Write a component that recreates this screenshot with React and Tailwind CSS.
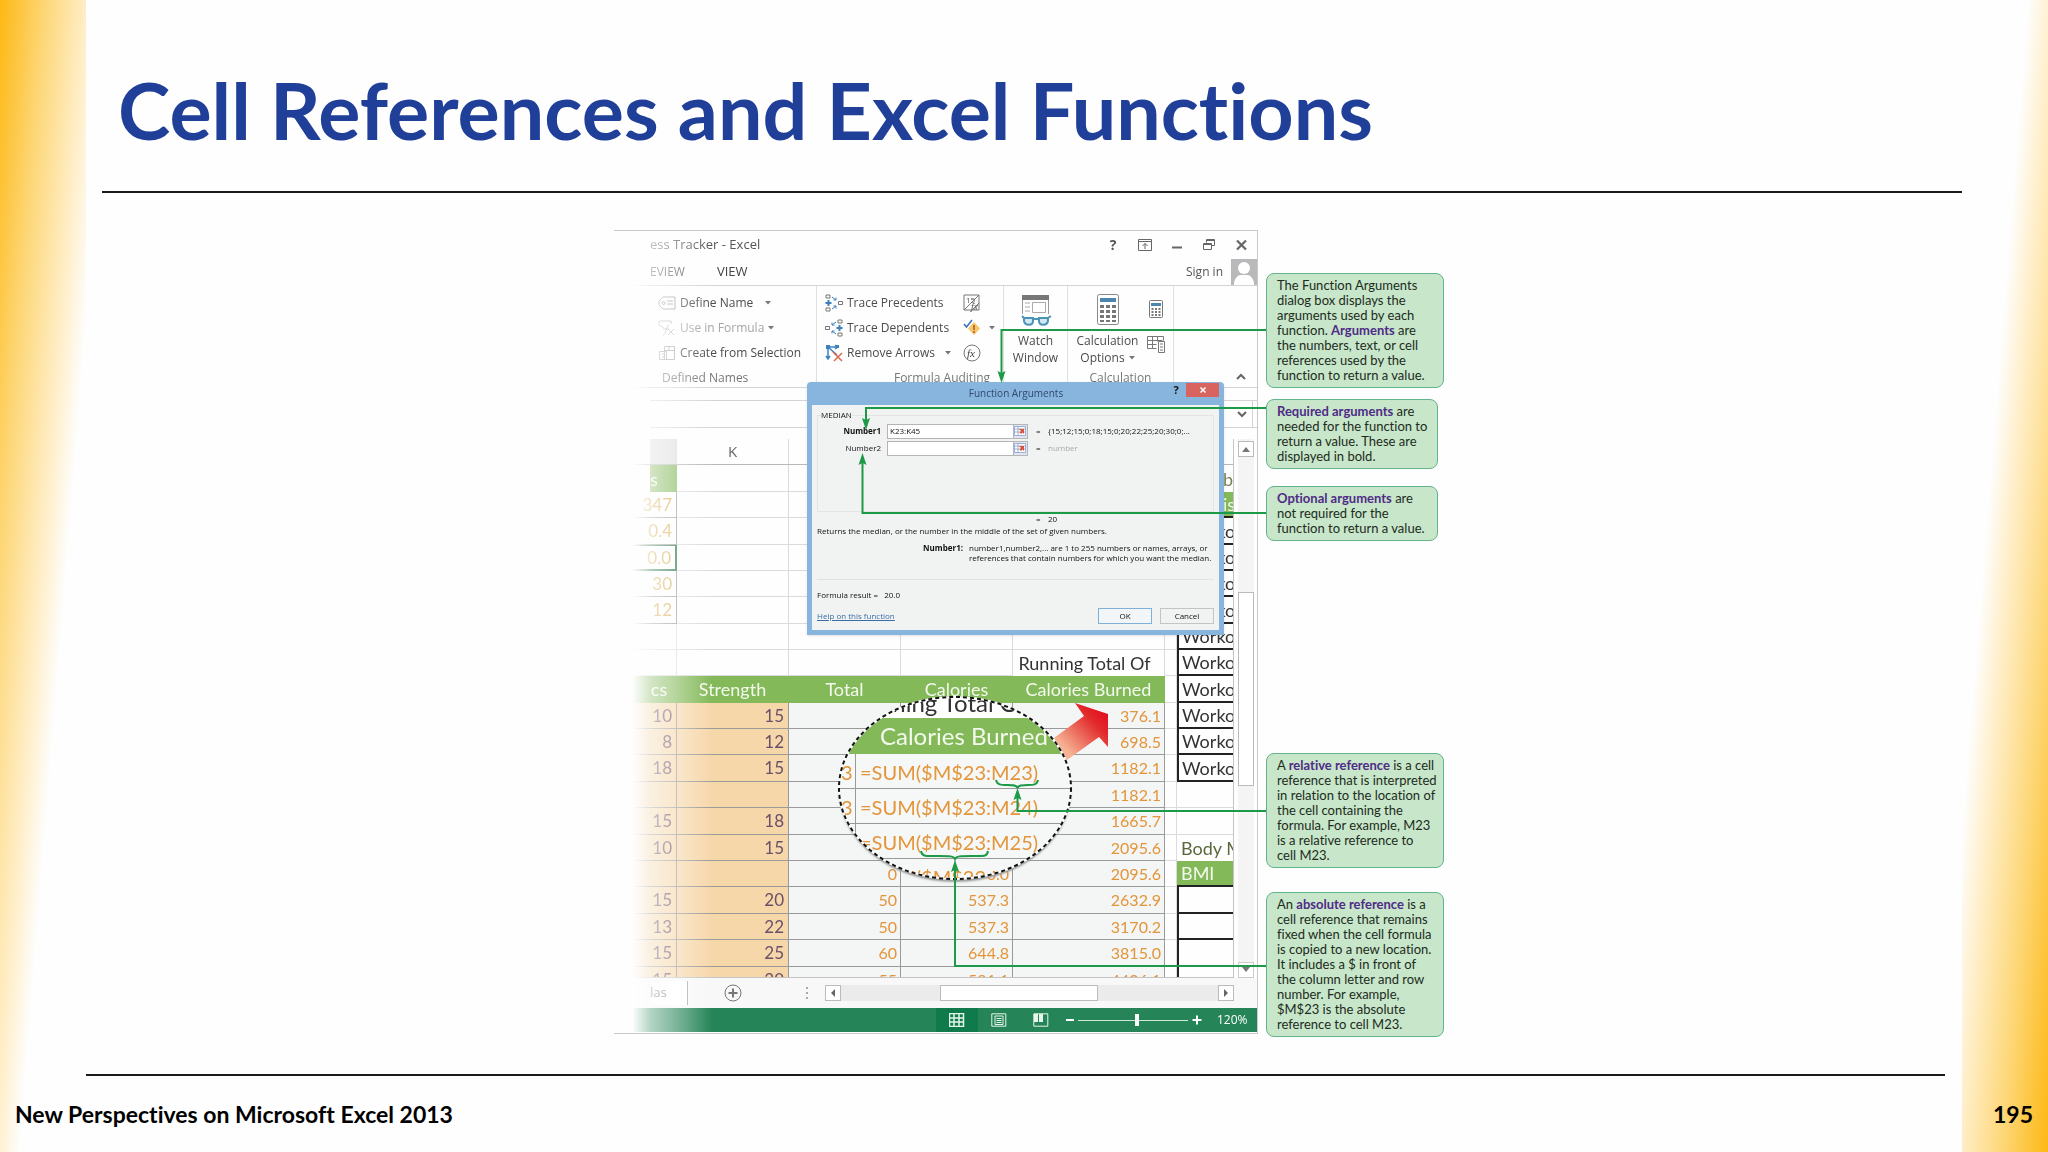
import React from "react";

const headCell = "border-b border-r border-[#84b95a] bg-[#84b95a] p-0 text-center font-normal text-[#f3f9ec]";
const plainCell = "border-b border-r border-[#dcdadf] p-0";
const peachCell = "border-b border-r border-[#9c9a98] bg-[#f6d7aa] p-0 pr-1 text-right text-[17px] text-[#6a5068]";
const valueCell = "border-b border-r border-[#9a9a9a] bg-[#f4f5f5] p-0 pr-[3px] text-right text-[16px] text-[#e3953a]";

const dataRows = [
  ["10", "15", "", "", "376.1", "Workout"],
  ["8", "12", "", "", "698.5", "Workout"],
  ["18", "15", "", "", "1182.1", "Workout"],
  ["", "", "", "", "1182.1", ""],
  ["15", "18", "", "", "1665.7", ""],
  ["10", "15", "", "", "2095.6", "Body Mass"],
  ["", "", "0", "0.0", "2095.6", "BMI"],
  ["15", "20", "50", "537.3", "2632.9", "box"],
  ["13", "22", "50", "537.3", "3170.2", "box"],
  ["15", "25", "60", "644.8", "3815.0", "box"],
  ["15", "30", "55", "591.1", "4406.1", "box"],
];

const topRows = ["s", "347", "0.4", "0.0", "30", "12", ""];

const rowHeight = (i) => (i % 5 === 0 || i % 5 === 2 ? "h-[27px]" : "h-[26px]");

const Caret = () => (
  <svg className="h-1 w-1.5 shrink-0" viewBox="0 0 6 4">
    <path d="M0 0h6L3 3.6z" fill="#777" />
  </svg>
);

// right hand column of the sheet, cut off by the scroll bar
const SideCell = ({ value }) => {
  if (value === "Workout") {
    return (
      <td className="overflow-hidden border-b-2 border-l-2 border-[#222] p-0 pl-[3px] text-left text-[#333]">
        Workout
      </td>
    );
  }
  if (value === "Body Mass") {
    return <td className="overflow-hidden p-0 pl-1 text-left text-[#58683c]">Body Mass</td>;
  }
  if (value === "BMI") {
    return <td className="border-b-2 border-[#222] bg-[#84b95a] p-0 pl-1 text-left text-[#f3f9ec]">BMI</td>;
  }
  if (value === "box") {
    return <td className="border-b-2 border-l-2 border-[#222] p-0"></td>;
  }
  return <td className="border-b border-[#dcdadf] p-0"></td>;
};

const TitleBar = () => (
  <div className="flex h-[27px] items-center justify-between pl-9 pr-[9px] text-[#555]">
    <span className="text-[13px]">ess Tracker - Excel</span>
    <div className="flex items-center gap-[18px]">
      <button aria-label="Help" className="w-3.5 text-[14px] font-bold leading-4">?</button>
      <button aria-label="Ribbon display options">
        <svg className="h-3 w-3.5" viewBox="0 0 14 12" fill="none" stroke="#666">
          <path d="M.5.5h13v11H.5zM.5 2.5h13M7 10V4.5M4.5 7 7 4.5 9.500 7" />
        </svg>
      </button>
      <button aria-label="Minimize">
        <svg className="h-3 w-3.5" viewBox="0 0 14 12">
          <path d="M2 8.500h10" stroke="#666" strokeWidth="2" />
        </svg>
      </button>
      <button aria-label="Restore">
        <svg className="h-3 w-3.5" viewBox="0 0 14 12" fill="none" stroke="#666">
          <path d="M4.500 3.500v-3h8v6h-3M1.500 4.500h8v6h-8zM1.500 5.500h8M4.500 1.500h8" />
        </svg>
      </button>
      <button aria-label="Close">
        <svg className="h-3 w-3.5" viewBox="0 0 14 12">
          <path d="m3 1.500 9 9m0-9-9 9" stroke="#666" strokeWidth="2.200" />
        </svg>
      </button>
    </div>
  </div>
);

const TabRow = () => (
  <div className="flex h-7 items-center border-b border-[#d4d4d4] pl-9 text-[12px] text-[#555]">
    <button>EVIEW</button>
    <button className="ml-8 text-[13px] text-[#444]">VIEW</button>
    <button className="ml-auto mr-2">Sign in</button>
    <svg className="size-[26px]" viewBox="0 0 26 26">
      <path d="M0 0h26v26H0z" fill="#b9b9bb" />
      <circle cx="13" cy="9" r="6" fill="#fff" />
      <path d="M3 26c0-7 4-10 7-10h6c3 0 7 3 7 10z" fill="#fff" />
    </svg>
  </div>
);

const TraceIcon = ({ flip }) => (
  <svg className="h-[18px] w-[18px] shrink-0" viewBox="0 0 18 18" fill="none" stroke="#777">
    <g transform={flip ? "rotate(180 9 9)" : undefined}>
      <path d="M1 1h4v3H1zM1 14h4v3H1zM13.500 7.500h4v3h-4z" />
      <path d="M3.500 6v6M.5 9h6" stroke="#3b80bd" strokeWidth="2" />
      <path d="m7 3 4 3m0-2.500V6H8.500M7 15l4-3m0 2.500V12H8.500" stroke="#3b80bd" />
    </g>
  </svg>
);

const Ribbon = () => (
  <div className="flex h-[102px] border-b border-[#d4d4d4] pl-9 text-[12px] text-[#4c4c4c]">
    <div className="w-[167px] border-r border-[#e0e0e0] pl-2 pt-1">
      <button className="flex h-[25px] items-center gap-1">
        <svg className="h-3.5 w-[18px]" viewBox="0 0 18 14" fill="none" stroke="#999">
          <path d="M5 1h12v12H5L1 9V5zM9 5h6M9 8h6" />
          <circle cx="5.500" cy="7" r="1.500" />
        </svg>
        Define Name
        <span className="ml-2"><Caret /></span>
      </button>
      <button className="flex h-[25px] items-center gap-1 text-[#a5a5a5]">
        <svg className="h-4 w-[18px]" viewBox="0 0 18 16" fill="none" stroke="#bbb">
          <path d="M6 8 1 5V1h12v3M5 15c3 0 3-9 6-10M5 9h6M10 9l6 6m0-6-6 6" />
        </svg>
        Use in Formula
        <Caret />
      </button>
      <button className="flex h-[25px] items-center gap-1">
        <svg className="h-4 w-[18px]" viewBox="0 0 18 16" fill="none" stroke="#aaa">
          <path d="M6.500 1.500h10v13h-10zM6.500 5.500h10M11 1v4M1.500 6.500h7v8h-7zM4 9h3M4 12h3" />
        </svg>
        Create from Selection
      </button>
      <p className="pl-1 leading-[26px] text-[#777]">Defined Names</p>
    </div>
    <div className="w-[187px] border-r border-[#e0e0e0] pl-2 pt-1">
      <div className="flex">
        <div className="flex w-[138px] flex-col">
          <button className="flex h-[25px] items-center gap-1"><TraceIcon />Trace Precedents</button>
          <button className="flex h-[25px] items-center gap-1"><TraceIcon flip />Trace Dependents</button>
          <button className="flex h-[25px] items-center gap-1">
            <svg className="size-[18px] shrink-0" viewBox="0 0 18 18" fill="none">
              <path d="M3 3h10M3 3v12m-2-3 2 3 2-3M3 3l9 8M10 1l3 2-3 2" stroke="#3b80bd" strokeWidth="1.500" />
              <path d="M1 1h4v4H1zM11 1h3v3h-3z" fill="#3b80bd" />
              <path d="m8 8 9 9m0-8-8 8" stroke="#d8694c" strokeWidth="1.500" />
            </svg>
            <span className="mr-1.5">Remove Arrows</span>
            <Caret />
          </button>
        </div>
        <div className="flex flex-col">
          <button aria-label="Show formulas" className="flex h-[25px] items-center">
            <svg className="size-[18px]" viewBox="0 0 18 18">
              <path d="M1 1h15v15H1zM1 16 16 1M9 16l7-7" fill="none" stroke="#777" />
              <text x="3" y="9" fontSize="8" fill="#555">15</text>
              <text x="8" y="16" fontSize="9" fontStyle="italic" fill="#555">fx</text>
            </svg>
          </button>
          <button aria-label="Error checking" className="flex h-[25px] items-center gap-2">
            <svg className="size-[18px]" viewBox="0 0 18 18">
              <path d="m11 3 6 6.500-6 6.500-6-6.500z" fill="#f6c667" />
              <path d="M11 6v5m0 1v2" stroke="#b0562c" strokeWidth="1.500" />
              <path d="m1 5 2.500 3L9 1" fill="none" stroke="#3b70bd" strokeWidth="1.500" />
            </svg>
            <Caret />
          </button>
          <button aria-label="Evaluate formula" className="flex h-[25px] items-center">
            <svg className="size-[18px]" viewBox="0 0 18 18">
              <circle cx="9" cy="9" r="8" fill="none" stroke="#777" />
              <text x="4" y="13" fontSize="11" fontStyle="italic" fontFamily="Liberation Serif, serif" fill="#444">fx</text>
            </svg>
          </button>
        </div>
      </div>
      <p className="pl-14 text-center leading-[26px] text-[#777]">Formula Auditing</p>
    </div>
    <button className="flex w-16 flex-col items-center border-r border-[#e0e0e0] pt-2 leading-[17px]">
      <svg className="mb-1.5 h-8 w-8" viewBox="0 0 32 32" fill="none">
        <path d="M2.500 1v19M28.500 1v19" stroke="#999" />
        <path d="M2 1h27v5H2z" fill="#777" />
        <path d="M5 9h5M5 13h5M5 17h5" stroke="#aaa" />
        <path d="M12.500 8.500h13v10h-13z" stroke="#aaa" />
        <path d="M4 24h9v3c0 5-8 5-9 0zM19 24h9v3c-1 5-9 5-9 0zM13 25h6M4 24l-2-2m26 2 3-2" fill="#d3e8f2" stroke="#4c93b5" strokeWidth="2" />
      </svg>
      Watch
      <br />
      Window
    </button>
    <div className="flex w-[106px] flex-col border-r border-[#e0e0e0] pt-2">
      <div className="flex h-[71px]">
        <button className="flex w-[79px] flex-col items-center leading-[17px]">
          <svg className="mb-1.5 h-8 w-6 shrink-0" viewBox="0 0 24 32">
            <rect x="1.500" y=".5" width="21" height="30" rx="2" fill="#fff" stroke="#888" />
            <path d="M4 4h16v4H4z" fill="#4c86ae" />
            <path d="M6 11v17M12 11v17M18 11v17" stroke="#777" strokeWidth="4" strokeDasharray="3 2" />
          </svg>
          <span>Calculation</span>
          <span className="flex items-center gap-1">Options <Caret /></span>
        </button>
        <div className="flex flex-col items-center gap-[17px] pt-1.5">
          <button aria-label="Calculate now">
            <svg className="h-[18px] w-[18px]" viewBox="0 0 18 18">
              <rect x="2.500" y=".5" width="13" height="17" rx="1" fill="#fff" stroke="#777" />
              <path d="M4 3h10v3H4z" fill="#4c86ae" />
              <path d="M5.500 8v8M9 8v8M12.500 8v8" stroke="#777" strokeWidth="2" strokeDasharray="2 1" />
            </svg>
          </button>
          <button aria-label="Calculate sheet">
            <svg className="h-[18px] w-[18px]" viewBox="0 0 18 18" fill="none" stroke="#777">
              <path d="M.5 1.500h16v4M.5 1.500v12h9M.5 5.500h15M.5 9.500h9M5.500 1.500v12M10.500 1.500v5M11.500 6.500h6v11h-6zM13 9h3M13 12h3M13 15h3" />
            </svg>
          </button>
        </div>
      </div>
      <span className="text-center leading-[26px] text-[#777]">Calculation</span>
    </div>
    <button aria-label="Collapse ribbon" className="ml-auto mr-2.5 self-end pb-1.5">
      <svg className="h-2 w-3" viewBox="0 0 12 8">
        <path d="m2 6 4-4 4 4" fill="none" stroke="#666" strokeWidth="2" />
      </svg>
    </button>
  </div>
);

const Sheet = () => (
  <div className="flex h-[539px]">
    <div className="w-[620px] shrink-0 overflow-hidden border-b border-r border-[#c4c4c4]">
      <div className="flex h-[26px] border-b border-[#b8b8b8] pl-9 text-[15px] leading-[25px] text-[#666]">
        <div className="w-[27px] border-r border-[#ddd] bg-[#dedede]"></div>
        <div className="w-28 border-r border-[#ddd] text-center">K</div>
      </div>
      <table className="w-full table-fixed border-separate border-spacing-0 whitespace-nowrap font-[Lato,sans-serif] text-[18px] leading-5">
        <colgroup>
          <col className="w-[63px]" />
          <col className="w-28" />
          <col className="w-28" />
          <col className="w-28" />
          <col className="w-[152px]" />
          <col className="w-3" />
          <col className="w-14" />
        </colgroup>
        <tbody>
          {topRows.map((value, i) => (
            <tr key={i} className={rowHeight(i)}>
              {i === 0 && (
                <td className="bg-[linear-gradient(to_right,transparent_36px,#84b95a_36px)] p-0 pl-9 text-left text-[#f3f9ec]">s</td>
              )}
              {i > 0 && i < 6 && (
                <td
                  className={`border-b border-r p-0 pr-1 text-right text-[17px] text-[#d9ac4f] ${
                    i === 3 ? "border-b-2 border-r-2 border-t border-[#217346]" : "border-[#999]"
                  }`}
                >
                  {value}
                </td>
              )}
              {i === 6 && <td className={plainCell}></td>}
              <td className={plainCell}></td>
              <td className={plainCell}></td>
              <td className={plainCell}></td>
              <td className={plainCell}></td>
              <td className={plainCell}></td>
              {i === 0 && <td className="p-0 pl-[46px] text-left text-[#7c8358]">b</td>}
              {i === 1 && (
                <td className="overflow-hidden border-b-2 border-[#222] bg-[#84b95a] p-0 pl-[46px] text-left text-[#f3f9ec]">is</td>
              )}
              {i > 1 && <SideCell value="Workout" />}
            </tr>
          ))}
          <tr className="h-[26px]">
            <td className={plainCell}></td>
            <td className={plainCell}></td>
            <td className={plainCell}></td>
            <td className={plainCell}></td>
            <td className="border-r border-[#dcdadf] p-0 pr-2 text-center text-[#333]">Running Total Of</td>
            <td className={plainCell}></td>
            <SideCell value="Workout" />
          </tr>
          <tr className="h-[27px]">
            <th className={`${headCell} pl-7`}>cs</th>
            <th className={headCell}>Strength</th>
            <th className={headCell}>Total</th>
            <th className={headCell}>Calories</th>
            <th className={headCell}>Calories Burned</th>
            <td className={plainCell}></td>
            <SideCell value="Workout" />
          </tr>
          {dataRows.map((row, i) => (
            <tr key={i} className={rowHeight(i + 3)}>
              <td className={peachCell}>{row[0]}</td>
              <td className={peachCell}>{row[1]}</td>
              <td className={valueCell}>{row[2]}</td>
              <td className={valueCell}>{row[3]}</td>
              <td className={valueCell}>{row[4]}</td>
              <td className={plainCell}></td>
              <SideCell value={row[5]} />
            </tr>
          ))}
        </tbody>
      </table>
    </div>
    <div className="ml-1 flex w-4 flex-col bg-[#f4f4f4]">
      <button aria-label="Scroll up" className="mt-0.5 flex h-4 items-center justify-center border border-[#bbb] bg-white">
        <svg className="h-1.5 w-2" viewBox="0 0 8 6"><path d="M0 6h8L4 1z" fill="#777" /></svg>
      </button>
      <div className="mt-[135px] h-[194px] border border-[#bbb] bg-white"></div>
      <button aria-label="Scroll down" className="mt-auto flex h-4 items-center justify-center border border-[#ccc] bg-white">
        <svg className="h-1.5 w-2" viewBox="0 0 8 6"><path d="M0 0h8L4 5z" fill="#777" /></svg>
      </button>
    </div>
  </div>
);

const SheetTabs = () => (
  <div className="flex h-[30px] items-center bg-[#f8f8f8] pl-9 pr-[23px]">
    <button className="h-6 w-[38px] border-r border-[#aaa] bg-white text-left text-[13px] text-[#777]">las</button>
    <button aria-label="New sheet" className="ml-9">
      <svg className="size-[18px]" viewBox="0 0 18 18" fill="none" stroke="#777">
        <circle cx="9" cy="9" r="8" />
        <path d="M9 4.500v9M4.500 9h9" strokeWidth="2" />
      </svg>
    </button>
    <svg className="ml-16 h-3 w-0.5" viewBox="0 0 2 12">
      <path d="M0 0h2v2H0zM0 5h2v2H0zM0 10h2v2H0z" fill="#aaa" />
    </svg>
    <div className="ml-[17px] flex h-4 flex-1 bg-[#ebebeb]">
      <button aria-label="Scroll left" className="flex w-4 items-center justify-center border border-[#bbb] bg-white">
        <svg className="h-2 w-1.5" viewBox="0 0 6 8"><path d="M5 0v8L1 4z" fill="#666" /></svg>
      </button>
      <div className="ml-[99px] w-[158px] border border-[#bbb] bg-white"></div>
      <button aria-label="Scroll right" className="ml-auto flex w-4 items-center justify-center border border-[#bbb] bg-white">
        <svg className="h-2 w-1.5" viewBox="0 0 6 8"><path d="M1 0v8l4-4z" fill="#666" /></svg>
      </button>
    </div>
  </div>
);

const StatusBar = () => (
  <div className="flex h-6 items-center justify-end bg-[#268558] pr-2 text-white">
    <button aria-label="Normal view" className="flex h-6 w-[42px] items-center justify-center bg-[#0f7a4c]">
      <svg className="h-3.5 w-4" viewBox="0 0 16 14" fill="none" stroke="#e6f5ec">
        <path d="M.5.5h14v13H.5zM.5 5h14M.5 9h14M5 .5v13M10 .5v13" strokeWidth="1.500" />
      </svg>
    </button>
    <button aria-label="Page layout view" className="flex w-[42px] justify-center">
      <svg className="h-3.5 w-4" viewBox="0 0 16 14" fill="none" stroke="#e6f5ec">
        <path d="M.8.8h14v12.400H.8zM4 3h8v8.500H4zM5.500 5.500h5M5.500 7.500h5M5.500 9.500h5" />
      </svg>
    </button>
    <button aria-label="Page break preview" className="flex w-[42px] justify-center">
      <svg className="h-3.5 w-4" viewBox="0 0 16 14">
        <path d="M.8.8h14v12.400H.8z" fill="none" stroke="#e6f5ec" />
        <path d="M1 1h4v8H1zM6 1h4v8H6z" fill="#e6f5ec" />
      </svg>
    </button>
    <button aria-label="Zoom out" className="ml-1 h-0.5 w-2 bg-white"></button>
    <input
      type="range"
      aria-label="Zoom"
      min="0"
      max="100"
      defaultValue="54"
      className="mx-1 h-4 w-[110px] appearance-none bg-[linear-gradient(#cfe8da,#cfe8da)] bg-[length:100%_1px] bg-center bg-no-repeat [&::-webkit-slider-thumb]:h-3 [&::-webkit-slider-thumb]:w-1 [&::-webkit-slider-thumb]:appearance-none [&::-webkit-slider-thumb]:bg-white"
    />
    <button aria-label="Zoom in">
      <svg className="size-2.5" viewBox="0 0 10 10"><path d="M5 .5v9M.5 5h9" stroke="#fff" strokeWidth="2" /></svg>
    </button>
    <span className="ml-[15px] w-8 text-[12px]">120%</span>
  </div>
);

const RefButton = ({ label }) => (
  <button aria-label={label} className="flex h-full w-4 items-center justify-center border-l border-[#a9b6d6] bg-[#dfe5f3]">
    <svg className="h-2.5 w-3" viewBox="0 0 12 10">
      <path d="M.5.500h11v9H.5zM.5 3h11M.5 6h11M4 .5v9" fill="#fff" stroke="#8d9cc8" strokeWidth=".8" />
      <path d="M5 3h5v5L8.500 6.500 7 8 5.500 6.500 7 5z" fill="#d8543c" />
    </svg>
  </button>
);

const FunctionDialog = () => (
  <div className="absolute left-[193px] top-[152px] w-[417px] rounded-t-sm bg-[#88b5de] px-[5px] pb-[5px] text-[8px] font-medium leading-[10px] text-[#111] shadow">
    <div className="flex h-[23px] items-start">
      <h2 className="flex-1 pl-[54px] text-center text-[10px] leading-[22px] text-[#2f4a6c]">Function Arguments</h2>
      <button aria-label="Help" className="w-5 text-[11px] font-bold leading-4">?</button>
      <button aria-label="Close" className="mt-px flex h-3.5 w-[33px] items-center justify-center bg-[#d9645f]">
        <svg className="size-1.5" viewBox="0 0 6 6"><path d="m.5.5 5 5m0-5-5 5" stroke="#fff" strokeWidth="1.500" /></svg>
      </button>
    </div>
    <div className="flex h-[225px] flex-col bg-[#f1f2f2] px-[5px] pt-[5px]">
      <fieldset className="h-[102px] border border-[#e4e4e4]">
        <legend className="ml-[3px] leading-[10px]">MEDIAN</legend>
        <div className="mt-[3px] flex h-4 items-center">
          <label htmlFor="num1" className="w-[63px] text-right font-bold">Number1</label>
          <div className="ml-1.5 flex h-[15px] w-[141px] border border-[#b5b5b5] bg-white">
            <input id="num1" defaultValue="K23:K45" className="w-full min-w-0 pl-0.5 outline-none" />
            <RefButton label="Select range for Number1" />
          </div>
          <span className="ml-2 w-3">=</span>
          <span className="whitespace-nowrap">{"{15;12;15;0;18;15;0;20;22;25;20;30;0;..."}</span>
        </div>
        <div className="mt-px flex h-4 items-center">
          <label htmlFor="num2" className="w-[63px] text-right">Number2</label>
          <div className="ml-1.5 flex h-[15px] w-[141px] border border-[#b5b5b5] bg-white">
            <input id="num2" className="w-full min-w-0 pl-0.5 outline-none" />
            <RefButton label="Select range for Number2" />
          </div>
          <span className="ml-2 w-3">=</span>
          <span className="text-[#aaa]">number</span>
        </div>
      </fieldset>
      <div className="mt-0.5 flex h-3 pl-[219px]">
        <span className="w-3">=</span>
        <span>20</span>
      </div>
      <p>Returns the median, or the number in the middle of the set of given numbers.</p>
      <div className="mt-[7px] flex whitespace-nowrap">
        <b className="w-[146px] text-right">Number1:</b>
        <p className="ml-1.5">
          number1,number2,... are 1 to 255 numbers or names, arrays, or
          <br />
          references that contain numbers for which you want the median.
        </p>
      </div>
      <p className="mt-4 border-t border-[#e2e2e2] pt-2.5">
        Formula result = <span className="ml-1">20.0</span>
      </p>
      <div className="mt-2 flex items-center gap-2">
        <a href="#help" className="mr-auto text-[#3a6ea5] underline">Help on this function</a>
        <button className="h-4 w-[54px] border border-[#7fb2d8] bg-[#f2f6f9]">OK</button>
        <button className="h-4 w-[54px] border border-[#c4c4c4]">Cancel</button>
      </div>
    </div>
  </div>
);

const Lens = () => (
  <div className="absolute left-[225px] top-[467px] h-[182px] w-[232px] overflow-hidden rounded-[50%] bg-[#f6f7f7] font-[Lato,sans-serif] text-[20px] whitespace-nowrap text-[#e3953a] shadow-[0_3px_2px_#999]">
    <p className="h-[21px] bg-white pl-3 text-[24px] leading-[12px] text-[#333]">Running Total Of</p>
    <p className="h-9 bg-[#84b95a] pl-[41px] text-[24px] leading-9 text-[#f3f9ec]">Calories Burned</p>
    {["M23", "M24", "M25", "M26"].map((cell, i) => (
      <div key={cell} className="flex h-[35px] border-b border-[#999] leading-[37px]">
        <span className="w-[17px] border-r border-[#999] pl-0.5">{i < 2 ? "3" : ""}</span>
        <span className="pl-1">=SUM($M$23:{cell})</span>
      </div>
    ))}
  </div>
);

const RedArrow = () => (
  <svg className="absolute left-[440px] top-[472px] h-[60px] w-[56px]" viewBox="0 0 56 60">
    <defs>
      <linearGradient id="redArrow" x1="0" y1="1" x2="1" y2="0">
        <stop offset=".2" stopColor="#f6b394" />
        <stop offset=".7" stopColor="#e22a2c" />
        <stop offset="1" stopColor="#e2001a" />
      </linearGradient>
    </defs>
    <path d="M21 1 54 12v33l-9-10-32 23L0 36l30-22z" fill="url(#redArrow)" />
  </svg>
);

const Connectors = () => (
  <svg className="pointer-events-none absolute left-0 top-0 h-[805px] w-[830px]" viewBox="0 0 830 805" fill="none" stroke="#1c9a48" strokeWidth="2">
    <ellipse cx="341" cy="558" rx="116" ry="91" stroke="#fff" strokeWidth="2" />
    <ellipse cx="341" cy="558" rx="116" ry="91" stroke="#111" strokeWidth="2" strokeDasharray="4 3" />
    <path d="M652 100H387.500V145" />
    <path d="M652 178H252V192" />
    <path d="M652 283H248.500V230" />
    <path d="M652 581H403.500V565" />
    <path d="M652 736H341V638" />
    <path d="M382 550c1 5 5 5 11 5s10 0 10.500 3c.5-3 5-3 10.500-3s9 0 10-5" />
    <path d="M307 621c1 6 5 5 17 5s16 0 17 3c1-3 5-3 17-3s15 1 16-5" />
    <g fill="#1c9a48" stroke="none">
      <path d="m387.500 153-4-12 4 2 4-2z" />
      <path d="m252 200-4-12 4 2 4-2z" />
      <path d="m248.500 223-4 12 4-2 4 2z" />
      <path d="m403.500 558-4 12 4-2 4 2z" />
      <path d="m341 630-4 12 4-2 4 2z" />
    </g>
  </svg>
);

const calloutBox = "rounded-lg border border-[#62b48b] bg-[#c7e6ca] py-1 pl-2.5 whitespace-nowrap";
const term = "font-bold text-[#4f2b86]";

const Callouts = () => (
  <div className="ml-2 w-[178px] pt-[43px] font-[Lato,sans-serif] text-[13px] leading-[15px] text-[#1d2b20]">
    <p className={calloutBox}>
      The Function Arguments<br />
      dialog box displays the<br />
      arguments used by each<br />
      function. <b className={term}>Arguments</b> are<br />
      the numbers, text, or cell<br />
      references used by the<br />
      function to return a value.
    </p>
    <p className={`${calloutBox} mr-1.5 mt-[11px]`}>
      <b className={term}>Required arguments</b> are<br />
      needed for the function to<br />
      return a value. These are<br />
      displayed in bold.
    </p>
    <p className={`${calloutBox} mr-1.5 mt-[17px]`}>
      <b className={term}>Optional arguments</b> are<br />
      not required for the<br />
      function to return a value.
    </p>
    <p className={`${calloutBox} mt-[212px]`}>
      A <b className={term}>relative reference</b> is a cell<br />
      reference that is interpreted<br />
      in relation to the location of<br />
      the cell containing the<br />
      formula. For example, M23<br />
      is a relative reference to<br />
      cell M23.
    </p>
    <p className={`${calloutBox} mt-6`}>
      An <b className={term}>absolute reference</b> is a<br />
      cell reference that remains<br />
      fixed when the cell formula<br />
      is copied to a new location.<br />
      It includes a $ in front of<br />
      the column letter and row<br />
      number. For example,<br />
      $M$23 is the absolute<br />
      reference to cell M23.
    </p>
  </div>
);

const App = () => {
  return (
    <div className="flex min-h-screen flex-col bg-[#fefefe] bg-[linear-gradient(274.6deg,transparent_37%,#ffefcc_50%,#fdd778_74%,#fdb813_100%),linear-gradient(94.6deg,transparent_37%,#ffefcc_50%,#fdd778_74%,#fdb813_100%)] bg-[length:86px_100%,86px_100%] bg-[position:left_top,right_top] bg-no-repeat font-[Lato,sans-serif] [font-variant-ligatures:none]">
      <header className="ml-[102px] mr-[86px] border-b-2 border-[#1a1a1a] pb-[37px] pl-4 pt-[66px]">
        <h1 className="text-[79px] font-bold leading-[88px] text-[#1f3f99]">Cell References and Excel Functions</h1>
      </header>

      <main className="flex flex-1 justify-center pl-2.5 pt-[37px]">
        <div className="relative flex">
          <div className="h-[804px] w-[644px] shrink-0 border-y border-r border-[#c9c9c9] font-['Open_Sans',sans-serif]">
            <div className="[mask-image:linear-gradient(to_right,transparent_18px,rgb(0_0_0/.35)_37px,rgb(0_0_0/.6)_62px,black_98px)]">
              <TitleBar />
              <TabRow />
              <Ribbon />
              <div className="ml-9 h-[13px] border-b border-[#d4d4d4]"></div>
              <div className="ml-9 flex h-[27px] items-center justify-end border-b border-[#d4d4d4]">
                <button aria-label="Expand formula bar" className="mr-1 flex h-full w-[22px] items-center justify-center border-r border-[#d4d4d4]">
                  <svg className="h-2 w-3" viewBox="0 0 12 8">
                    <path d="m2 2 4 4 4-4" fill="none" stroke="#666" strokeWidth="2" />
                  </svg>
                </button>
              </div>
              <div className="h-[11px]"></div>
              <Sheet />
              <SheetTabs />
              <StatusBar />
            </div>
          </div>
          <Callouts />
          <div className="font-['Open_Sans',sans-serif]">
            <FunctionDialog />
          </div>
          <RedArrow />
          <Lens />
          <Connectors />
        </div>
      </main>

      <footer>
        <div className="ml-[86px] mr-[103px] border-t-2 border-[#1a1a1a]"></div>
        <div className="flex justify-between px-[15px] pb-[22px] pt-[22px] text-[23px] font-bold leading-8 text-black">
          <span>New Perspectives on Microsoft Excel 2013</span>
          <span>195</span>
        </div>
      </footer>
    </div>
  );
};

export default App;
